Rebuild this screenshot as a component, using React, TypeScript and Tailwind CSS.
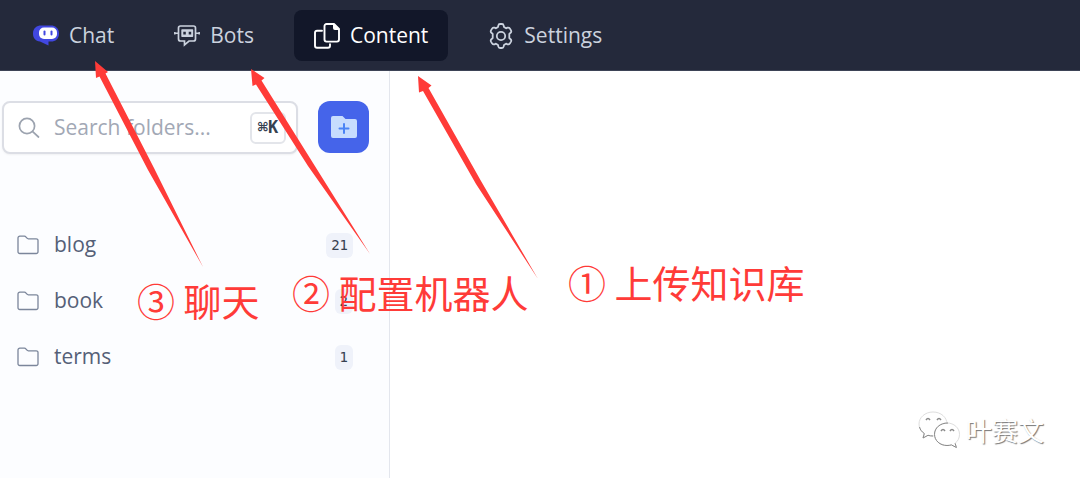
import React from 'react';
import clsx from 'clsx';

interface IconProps {
  className?: string;
}

const ChatIcon: React.FC<IconProps> = ({ className }) => (
  <svg viewBox="0 0 26 26" className={className} aria-hidden="true">
    <path
      d="M8 2.500h10c4 0 8 2.600 8 8s-3.500 8-8 8h-2.500v4L7 18.500C2.500 17.800 0 15.500 0 10.500c0-5.400 4-8 8-8z"
      fill="#4147e0"
    />
    <rect x="6" y="4.500" width="18" height="11.500" rx="5" fill="#fff" />
    <rect x="10.500" y="7.500" width="2" height="5" rx="1" fill="#4147e0" />
    <rect x="17.500" y="7.500" width="2" height="5" rx="1" fill="#4147e0" />
  </svg>
);

const BotIcon: React.FC<IconProps> = ({ className }) => (
  <svg viewBox="0 0 26 26" className={className} fill="none" stroke="currentColor" aria-hidden="true">
    <path
      d="M6.500 3h13a2 2 0 0 1 2 2v11a2 2 0 0 1-2 2h-4.500l-4.500 3.800V18H6.500a2 2 0 0 1-2-2V5a2 2 0 0 1 2-2z"
      strokeWidth="1.700"
    />
    <path d="M0.500 10.200h4M21.500 10.200h4M0.800 9v2.400M25.200 9v2.400" strokeWidth="1.500" />
    <path
      fillRule="evenodd"
      d="M8 6.200h10.500a.7.700 0 0 1 .7.700v6.400a.7.700 0 0 1-.7.700H8a.7.700 0 0 1-.7-.7V6.900A.7.700 0 0 1 8 6.200zm1.300 2.600v2.700h2.500V8.800zm5.400 0v2.700h2.500V8.800z"
      fill="currentColor"
      stroke="none"
    />
  </svg>
);

const ContentIcon: React.FC<IconProps> = ({ className }) => (
  <svg viewBox="0 0 26 26" className={className} fill="none" stroke="currentColor" strokeWidth="1.900" aria-hidden="true">
    <path d="M12.500 1h7.500L25 6v10.600a2 2 0 0 1-2 2H12.500a2 2 0 0 1-2-2V3a2 2 0 0 1 2-2z" strokeLinejoin="round" />
    <path d="M19.500 1.200V5.500a1 1 0 0 0 1 1H25z" fill="currentColor" strokeWidth="1" strokeLinejoin="round" />
    <path d="M8 7.700H3a2 2 0 0 0-2 2v13a2 2 0 0 0 2 2h11a2 2 0 0 0 2-2v-1.500" strokeLinecap="round" />
  </svg>
);

const GearIcon: React.FC<IconProps> = ({ className }) => (
  <svg viewBox="0 0 26 26" className={className} fill="none" stroke="currentColor" strokeWidth="1.800" strokeLinejoin="round" aria-hidden="true">
    <path d="M10.300 2.600Q10.600 1 12 1h2q1.400 0 1.700 1.600l.3 1.500 2 1.200 1.500-.6q1.500-.5 2.300.7l1.200 2q.7 1.300-.4 2.400l-1.300 1.100v4.200l1.300 1.100q1.100 1.100.4 2.400l-1.200 2q-.8 1.200-2.300.7l-1.500-.6-2 1.200-.3 1.500Q15.400 25 14 25h-2q-1.400 0-1.700-1.600l-.3-1.500-2-1.200-1.500.6q-1.500.5-2.300-.7l-1.200-2q-.7-1.300.4-2.400l1.300-1.100v-4.200L3.400 9.800q-1.100-1.100-.4-2.400l1.200-2q.8-1.200 2.300-.7l1.500.6 2-1.200z" />
    <circle cx="13" cy="13" r="4.200" />
  </svg>
);

const SearchIcon: React.FC<IconProps> = ({ className }) => (
  <svg viewBox="0 0 22 22" className={className} fill="none" stroke="currentColor" strokeWidth="1.700" strokeLinecap="round" aria-hidden="true">
    <circle cx="9" cy="9" r="7.600" />
    <path d="M14.700 14.700l5.800 5.300" />
  </svg>
);

const FolderIcon: React.FC<IconProps> = ({ className }) => (
  <svg viewBox="0 0 22 20" className={className} fill="none" stroke="currentColor" strokeWidth="1.300" strokeLinejoin="round" aria-hidden="true">
    <path d="M1 3a1.800 1.800 0 0 1 1.800-1.800h4.700q.8 0 1.300.6l1.200 1.400q.5.600 1.300.6h7.900A1.800 1.800 0 0 1 21 5.600v11.100a1.800 1.800 0 0 1-1.800 1.800H2.800A1.800 1.800 0 0 1 1 16.700z" />
  </svg>
);

const FolderPlusIcon: React.FC<IconProps> = ({ className }) => (
  <svg viewBox="0 0 26 24" className={className} aria-hidden="true">
    <path d="M2 1h9.500l3 3H24a2 2 0 0 1 2 2v15a2 2 0 0 1-2 2H2a2 2 0 0 1-2-2V3a2 2 0 0 1 2-2z" fill="#c7dcfe" />
    <path d="M13 9v9M8.500 13.500h9" stroke="#4b83f5" strokeWidth="2" strokeLinecap="round" />
  </svg>
);

const WechatIcon: React.FC<IconProps> = ({ className }) => (
  <svg viewBox="0 0 44 38" className={className} fill="#fff" stroke="#dedede" strokeWidth="1" aria-hidden="true">
    <path d="M15 1C7 1 1 6.500 1 13c0 4 2 7.300 5.300 9.500L5 27l5-2.700c1.600.5 3.200.7 5 .7 8 0 14-5.400 14-12S23 1 15 1z" />
    <path d="M1.500 16c.7 2.700 2.400 4.900 4.800 6.500L5 27l5-2.700c1.600.5 3.200.7 5 .7" fill="none" stroke="#8a8a8a" />
    <path d="M8 9q2-3 4 0M19 9q2-3 4 0" fill="none" stroke="#8a8a8a" strokeWidth="1.500" />
    <path d="M29 12c-7 0-12.500 5-12.500 11.300S22 34.500 29 34.500c1.600 0 3-.2 4.400-.6l5 2.600-1.300-4.200c2.700-2 4.400-5.200 4.400-9C41.500 17 36 12 29 12z" />
    <path d="M30 12c-8 0-13.500 5-13.500 11.300S22 34.500 29 34.500c1.600 0 3-.2 4.400-.6l5 2.600-1.300-4.200" fill="none" stroke="#8a8a8a" />
    <path d="M23 20q2-3 4 0M32 20q2-3 4 0" fill="none" stroke="#8a8a8a" strokeWidth="1.500" />
  </svg>
);

const navItems = [
  { label: 'Chat', icon: ChatIcon },
  { label: 'Bots', icon: BotIcon },
  { label: 'Content', icon: ContentIcon, active: true },
  { label: 'Settings', icon: GearIcon },
];

const folders = [
  { name: 'blog', count: 21 },
  { name: 'book', count: 2 },
  { name: 'terms', count: 1 },
];

const Header: React.FC = () => (
  <header className="border-b border-[#3d4356] bg-[#24293b] pt-[10px] pb-[9px] pl-[13px]">
    <nav className="flex gap-5">
      {navItems.map(({ label, icon: Icon, active }) => (
        <a
          key={label}
          href="#"
          aria-current={active ? 'page' : undefined}
          className={clsx(
            'flex h-[51px] items-center gap-[10px] rounded-lg px-5 text-[21px]',
            active ? 'bg-[#121729] text-white' : 'text-[#cbd2de]'
          )}
        >
          <Icon className="size-[26px] shrink-0" />
          {label}
        </a>
      ))}
    </nav>
  </header>
);

const Sidebar: React.FC = () => (
  <aside className="w-[390px] shrink-0 border-r border-[#e3e6ed] bg-[#fcfdff] pt-[30px] pr-5 pl-[2px]">
    <div className="flex gap-5">
      <div className="flex h-[53px] min-w-0 flex-1 items-center rounded-lg border-2 border-[#dcdee5] bg-white pr-[10px] pl-[14px] shadow-xs">
        <SearchIcon className="size-[22px] shrink-0 text-[#9ca3af]" />
        <input
          type="text"
          aria-label="Search folders"
          placeholder="Search folders..."
          className="ml-[14px] min-w-0 flex-1 text-[21px] outline-none placeholder:text-[#a2a8b5]"
        />
        <kbd className="flex h-8 w-9 items-center justify-center rounded-md border-2 border-[#e3e5ea] font-['DejaVu_Sans_Mono',monospace] text-[17px] font-bold text-[#374151]">
          ⌘K
        </kbd>
      </div>
      <button
        type="button"
        aria-label="New folder"
        className="flex h-[52px] w-[51px] items-center justify-center rounded-xl bg-[#4564ea]"
      >
        <FolderPlusIcon className="h-6 w-[26px]" />
      </button>
    </div>

    <ul className="mt-[63px] pr-4 pl-[15px]">
      {folders.map((folder) => (
        <li key={folder.name}>
          <a href="#" className="flex h-14 items-center text-[21px] text-[#556077]">
            <FolderIcon className="h-5 w-[22px] shrink-0 text-[#7b869b]" />
            <span className="ml-[15px] flex-1">{folder.name}</span>
            <span className="rounded-md bg-[#eff2fa] px-[5px] font-['DejaVu_Sans_Mono',monospace] text-[14px] leading-[25px] text-[#374151]">
              {folder.count}
            </span>
          </a>
        </li>
      ))}
    </ul>
  </aside>
);

const Annotations: React.FC = () => (
  <div className="pointer-events-none absolute inset-0 overflow-hidden font-['Noto_Sans_CJK_SC',sans-serif] text-[38px] leading-[50px] whitespace-nowrap text-[#ff3b38]">
    <svg className="absolute top-0 left-0" width="1080" height="478" fill="#ff3b38" aria-hidden="true">
      <path d="M95 61l13 11-2.500 1.500L154 168 203 267 148 170 99.500 76.500 96 78z" />
      <path d="M251 69l13.500 9-3 2.500L313 163 370 254 308 166 256 84.500l-3.500 1.500z" />
      <path d="M418 76l13.500 9.500-3 2.500L481 181 538 279 476 184 423 91l-4 1.500z" />
    </svg>
    <p className="absolute top-[275px] left-[137px]">③ 聊天</p>
    <p className="absolute top-[267px] left-[292px]">② 配置机器人</p>
    <p className="absolute top-[257px] left-[568px]">① 上传知识库</p>
  </div>
);

const App: React.FC = () => (
  <div className="relative flex min-h-screen flex-col bg-white font-['Open_Sans','Noto_Sans',sans-serif]">
    <Header />
    <div className="flex flex-1">
      <Sidebar />
      <main className="flex flex-1 items-end justify-end pr-9 pb-7">
        <div className="flex items-center gap-1">
          <WechatIcon className="h-[38px] w-11" />
          <span className="font-['Noto_Sans_CJK_SC',sans-serif] text-[26px] leading-[40px] text-white [text-shadow:1px_1px_1px_#777]">
            叶赛文
          </span>
        </div>
      </main>
    </div>
    <Annotations />
  </div>
);

export default App;
